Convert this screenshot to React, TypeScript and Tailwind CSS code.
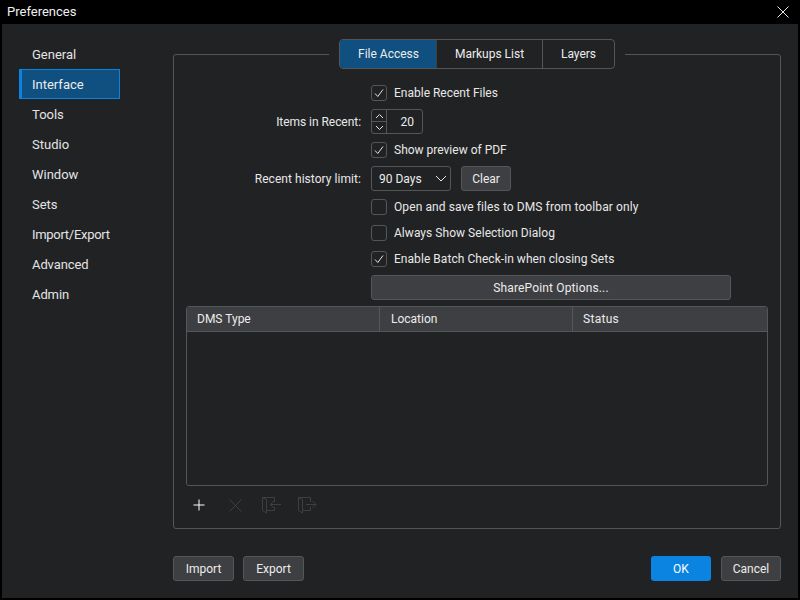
import React from "react";

function Check({ checked, label, track = "" }: { checked?: boolean; label: string; track?: string }) {
  return (
    <div className="flex items-center h-4 ml-[197px]">
      <div className="w-4 h-4 rounded-[3px] border border-[#55565a] flex items-center justify-center">
        {checked && (
          <svg width="14" height="14" viewBox="0 0 14 14" fill="none">
            <path d="M3 7.5 L5.8 10.5 L11 3.5" stroke="#e4e4e4" strokeWidth="1" />
          </svg>
        )}
      </div>
      <span className={`ml-[7px] text-[12px] text-[#e8e8e8] leading-4 ${track}`}>{label}</span>
    </div>
  );
}

function Btn({ children, className = "" }: { children: React.ReactNode; className?: string }) {
  return (
    <div className={`h-[25px] rounded-[3px] border border-[#55565a] bg-[#3e3f42] flex items-center justify-center text-[12px] text-[#ececec] ${className}`}>
      {children}
    </div>
  );
}

function Label({ children, track = "" }: { children: React.ReactNode; track?: string }) {
  return <div className={`w-[187px] mr-[10px] text-right text-[12px] text-[#e8e8e8] ${track}`}>{children}</div>;
}

const nav: [string, string][] = [
  ["General", ""],
  ["Interface", ""],
  ["Tools", ""],
  ["Studio", ""],
  ["Window", ""],
  ["Sets", ""],
  ["Import/Export", "tracking-[-0.3px]"],
  ["Advanced", "tracking-[-0.1px]"],
  ["Admin", "tracking-[-0.1px]"],
];

export default function App() {
  return (
    <div className="w-[800px] h-[600px] bg-black flex flex-col font-['Roboto',sans-serif]">
      <div className="h-6 flex items-center justify-between pl-[7px] pr-[11px] shrink-0">
        <span className="text-[13px] text-[#f0f0f0]">Preferences</span>
        <svg width="12" height="12" viewBox="0 0 12 12" fill="none">
          <path d="M0.5 0.5 L11.5 11.5 M11.5 0.5 L0.5 11.5" stroke="#e8e8e8" strokeWidth="1" />
        </svg>
      </div>
      <div className="flex-1 mx-0.5 mb-0.5 bg-[#212224] flex min-h-0">
        <div className="w-[171px] pt-[15px] shrink-0">
          {nav.map(([n, t]) => (
            <div
              key={n}
              className={
                n === "Interface"
                  ? "ml-[17px] w-[101px] h-[30px] flex items-center pl-[10px] pt-[2px] text-[13px] text-[#ececec] bg-[#0f5080] border border-[#0a84e0] border-l-[3px]"
                  : `ml-[17px] w-[101px] h-[30px] flex items-center pl-[13px] pt-[2px] text-[13px] text-[#e4e4e4] ${t}`
              }
            >
              {n}
            </div>
          ))}
        </div>
        <div className="flex-1 pr-[17px] pt-[30px] flex flex-col min-w-0">
          <div className="relative h-[475px] border border-[#55565a] rounded-[3px] pt-[30px] flex flex-col shrink-0">
            <div className="absolute -top-[16px] left-[155px] px-[10px] bg-[#212224] h-[31px]">
              <div className="flex h-[30px] w-[276px] rounded-[4px] border border-[#55565a] text-[12px] text-[#ececec] overflow-hidden">
                <div className="w-[97px] bg-[#0f5080] flex items-center justify-center pl-px border-r border-[#3e3f42]">File Access</div>
                <div className="w-[106px] flex items-center justify-center border-r border-[#55565a]">Markups List</div>
                <div className="flex-1 flex items-center justify-center">Layers</div>
              </div>
            </div>

            <Check checked label="Enable Recent Files" />
            <div className="flex items-center mt-2 h-[25px]">
              <Label track="tracking-[-0.05px]">Items in Recent:</Label>
              <div className="flex w-[52px] h-[25px] rounded-[3px] border border-[#55565a] text-[12px] text-[#ececec]">
                <div className="w-[15px] flex flex-col border-r border-[#55565a]">
                  <div className="flex-1 flex items-center justify-center border-b border-[#55565a]">
                    <svg width="9" height="6" viewBox="0 0 9 6" fill="none"><path d="M1 5 L4.5 1.5 L8 5" stroke="#e4e4e4" /></svg>
                  </div>
                  <div className="flex-1 flex items-center justify-center">
                    <svg width="9" height="6" viewBox="0 0 9 6" fill="none"><path d="M1 1 L4.5 4.5 L8 1" stroke="#e4e4e4" /></svg>
                  </div>
                </div>
                <div className="flex-1 flex items-center justify-end pr-[8px]">20</div>
              </div>
            </div>
            <div className="mt-2"><Check checked label="Show preview of PDF" /></div>
            <div className="flex items-center mt-2 h-[25px]">
              <Label track="tracking-[0.05px]">Recent history limit:</Label>
              <div className="flex items-center justify-between w-20 h-[25px] pl-[7px] pr-[3px] rounded-[3px] border border-[#55565a] text-[12px] text-[#ececec]">
                <span>90 Days</span>
                <svg width="12" height="7" viewBox="0 0 12 7" fill="none"><path d="M1 1 L6 6 L11 1" stroke="#e4e4e4" /></svg>
              </div>
              <Btn className="w-[50px] ml-[10px]">Clear</Btn>
            </div>
            <div className="mt-2"><Check label="Open and save files to DMS from toolbar only" track="tracking-[0.09px]" /></div>
            <div className="mt-[10px]"><Check label="Always Show Selection Dialog" track="tracking-[0.04px]" /></div>
            <div className="mt-[10px]"><Check checked label="Enable Batch Check-in when closing Sets" track="tracking-[0.05px]" /></div>
            <Btn className="ml-[197px] mt-2 w-[360px] tracking-[0.15px]">SharePoint Options...</Btn>

            <div className="mx-3 mt-1.5 h-[180px] border border-[#55565a] rounded-[3px] shrink-0">
              <div className="h-[25px] bg-[#3e3f42] border-b border-[#55565a] flex text-[12px] text-[#ececec] rounded-t-[3px]">
                <div className="w-[193px] pl-[10px] flex items-center border-r border-[#55565a]">DMS Type</div>
                <div className="w-[193px] pl-[11px] flex items-center border-r border-[#55565a]">Location</div>
                <div className="flex-1 pl-[10px] flex items-center tracking-[0.3px]">Status</div>
              </div>
            </div>

            <div className="flex items-center ml-[13px] mt-[7px] h-[24px] gap-[12px]">
              <div className="w-6 h-6 flex items-center justify-center">
                <svg width="12" height="12" viewBox="0 0 12 12" fill="none"><path d="M6 0.5 V11.5 M0.5 6 H11.5" stroke="#ffffff" /></svg>
              </div>
              <div className="w-6 h-6 flex items-center justify-center">
                <svg width="13" height="13" viewBox="0 0 13 13" fill="none"><path d="M0.5 0.5 L12.5 12.5 M12.5 0.5 L0.5 12.5" stroke="#3e3f42" /></svg>
              </div>
              <div className="w-6 h-6 flex items-center justify-center">
                <svg width="20" height="18" viewBox="0 0 20 18" fill="none" stroke="#3e3f42">
                  <path d="M1.5 1.5 H13.5 V6 M13.5 11 V14.5 H5.5 M1.5 1.5 V14.5 L5.5 17 V3.5 L1.5 1.5" />
                  <path d="M20 8.5 H9.5 M13 5 L9.5 8.5 L13 12" />
                </svg>
              </div>
              <div className="w-6 h-6 flex items-center justify-center">
                <svg width="20" height="18" viewBox="0 0 20 18" fill="none" stroke="#3e3f42">
                  <path d="M1.5 1.5 H13.5 V6 M13.5 11 V14.5 H5.5 M1.5 1.5 V14.5 L5.5 17 V3.5 L1.5 1.5" />
                  <path d="M9 8.5 H19 M15.5 5 L19 8.5 L15.5 12" />
                </svg>
              </div>
            </div>
          </div>

          <div className="flex items-center mt-[27px]">
            <Btn className="w-[61px]">Import</Btn>
            <Btn className="w-[61px] ml-[9px]">Export</Btn>
            <div className="flex-1" />
            <div className="w-[60px] h-[25px] rounded-[3px] bg-[#0a84e0] flex items-center justify-center text-[12px] text-white">OK</div>
            <Btn className="w-[60px] ml-[10px]">Cancel</Btn>
          </div>
        </div>
      </div>
    </div>
  );
}
